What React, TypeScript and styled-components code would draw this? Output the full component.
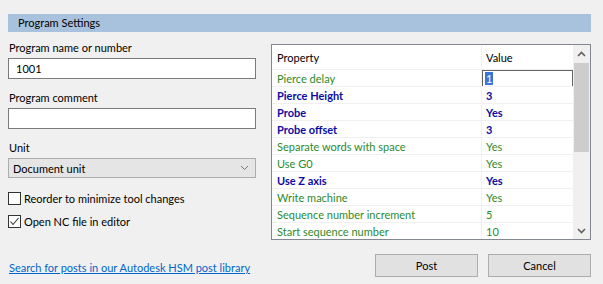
import React from "react";
import styled, { createGlobalStyle } from "styled-components";

const Global = createGlobalStyle`
  html, body { margin: 0; padding: 0; background: #f0f0f0; }
  body { font-family: Lato, "Noto Sans", sans-serif; font-size: 11px; color: #000; }
  * { box-sizing: border-box; }
`;

const Page = styled.div`
  width: 603px;
  height: 284px;
  background: #f0f0f0;
  padding-top: 14px;
  display: flex;
  flex-direction: column;
  overflow: hidden;
`;

const Header = styled.div`
  margin: 0 12px 0 8px;
  height: 18px;
  background: #a8c2dd;
  padding-left: 10px;
  line-height: 18px;
`;

const Body = styled.div`
  display: flex;
  margin-left: 8px;
`;

const Left = styled.div`
  width: 248px;
  display: flex;
  flex-direction: column;
  padding-top: 8px;
`;

const Label = styled.div<{ $mt?: number }>`
  height: 16px;
  line-height: 16px;
  margin-top: ${(p) => p.$mt ?? 0}px;
  padding-left: 1px;
`;

const TextInput = styled.div`
  margin-top: 2px;
  height: 21px;
  background: #fff;
  border: 1px solid #7a7a7a;
  padding-left: 7px;
  line-height: 19px;
`;

const Select = styled.div`
  margin-top: 2px;
  height: 20px;
  background: #e5e5e5;
  border: 1px solid #adadad;
  padding: 0 6px 0 4px;
  display: flex;
  align-items: center;
  justify-content: space-between;
`;

const CheckRow = styled.div<{ $mt: number }>`
  margin-top: ${(p) => p.$mt}px;
  height: 16px;
  display: flex;
  align-items: center;
  gap: 3px;
`;

const Box = styled.div`
  width: 13px;
  height: 13px;
  border: 1px solid #333;
  background: #fff;
  display: flex;
  align-items: center;
  justify-content: center;
`;

const Link = styled.a`
  margin-top: 31px;
  color: #0066cc;
  text-decoration: underline;
  line-height: 16px;
  padding-left: 1px;
  white-space: nowrap;
  cursor: pointer;
`;

const Right = styled.div`
  margin-left: 15px;
  margin-top: 12px;
  display: flex;
  flex-direction: column;
`;

const Grid = styled.div`
  width: 320px;
  height: 196px;
  border: 1px solid #828790;
  background: #fff;
  display: flex;
`;

const Table = styled.div`
  width: 301px;
  display: flex;
  flex-direction: column;
`;

const HeadRow = styled.div`
  height: 24px;
  display: flex;
  align-items: center;
`;

const Row = styled.div`
  height: 17px;
  display: flex;
  align-items: center;
  border-top: 1px solid #f0f0f0;
`;

const NameCell = styled.div<{ $bold?: boolean; $color?: string }>`
  width: 210px;
  padding-left: 5px;
  height: 100%;
  display: flex;
  align-items: center;
  border-right: 1px solid #f0f0f0;
  color: ${(p) => p.$color ?? "#000"};
  font-weight: ${(p) => (p.$bold ? 700 : 400)};
  white-space: nowrap;
`;

const ValueCell = styled.div<{ $bold?: boolean; $color?: string }>`
  flex: 1;
  padding-left: 4px;
  height: 100%;
  display: flex;
  align-items: center;
  color: ${(p) => p.$color ?? "#000"};
  font-weight: ${(p) => (p.$bold ? 700 : 400)};
`;

const EditCell = styled.div`
  flex: 1;
  height: 17px;
  border: 1px solid #646464;
  background: #fff;
  padding-left: 2px;
  display: flex;
  align-items: center;
`;

const Sel = styled.span`
  background: #3875d7;
  color: #fff;
  line-height: 13px;
  padding: 0 1px;
`;

const Scroll = styled.div`
  width: 17px;
  margin-left: auto;
  background: #f0f0f0;
  display: flex;
  flex-direction: column;
  align-items: center;
`;

const Arrow = styled.div`
  height: 17px;
  width: 17px;
  display: flex;
  align-items: center;
  justify-content: center;
`;

const Thumb = styled.div`
  width: 15px;
  height: 89px;
  background: #cdcdcd;
  margin-top: 1px;
`;

const Spacer = styled.div`
  flex: 1;
`;

const Buttons = styled.div`
  display: flex;
  gap: 10px;
  margin-top: 14px;
  margin-left: 104px;
`;

const Button = styled.button`
  width: 103px;
  height: 23px;
  background: #e1e1e1;
  border: 1px solid #adadad;
  font-family: inherit;
  font-size: 11px;
  color: #000;
  padding: 0;
`;

const GREEN = "#2c8a2c";
const BLUE = "#0c0ca4";

type P = { name: string; value: string; bold?: boolean };
const rows: P[] = [
  { name: "Pierce Height", value: "3", bold: true },
  { name: "Probe", value: "Yes", bold: true },
  { name: "Probe offset", value: "3", bold: true },
  { name: "Separate words with space", value: "Yes" },
  { name: "Use G0", value: "Yes" },
  { name: "Use Z axis", value: "Yes", bold: true },
  { name: "Write machine", value: "Yes" },
  { name: "Sequence number increment", value: "5" },
  { name: "Start sequence number", value: "10" },
];

const Chevron = ({ up }: { up?: boolean }) => (
  <svg width="9" height="6" viewBox="0 0 9 6">
    <path
      d={up ? "M1 5 L4.5 1.5 L8 5" : "M1 1 L4.5 4.5 L8 1"}
      fill="none"
      stroke="#606060"
      strokeWidth="1.6"
    />
  </svg>
);

export default function App() {
  return (
    <Page>
      <Global />
      <Header>Program Settings</Header>
      <Body>
        <Left>
          <Label>Program name or number</Label>
          <TextInput>1001</TextInput>
          <Label $mt={11}>Program comment</Label>
          <TextInput />
          <Label $mt={11}>Unit</Label>
          <Select>
            <span>Document unit</span>
            <svg width="9" height="6" viewBox="0 0 9 6">
              <path d="M1 1 L4.5 4.5 L8 1" fill="none" stroke="#777" strokeWidth="1" />
            </svg>
          </Select>
          <CheckRow $mt={12}>
            <Box />
            <span>Reorder to minimize tool changes</span>
          </CheckRow>
          <CheckRow $mt={7}>
            <Box>
              <svg width="11" height="11" viewBox="0 0 11 11">
                <path d="M1.5 5.5 L4 8.5 L9.5 2" fill="none" stroke="#333" strokeWidth="1.1" />
              </svg>
            </Box>
            <span>Open NC file in editor</span>
          </CheckRow>
          <Link>Search for posts in our Autodesk HSM post library</Link>
        </Left>
        <Right>
          <Grid>
            <Table>
              <HeadRow>
                <NameCell>Property</NameCell>
                <ValueCell>Value</ValueCell>
              </HeadRow>
              <Row>
                <NameCell $color={GREEN}>Pierce delay</NameCell>
                <EditCell>
                  <Sel>1</Sel>
                </EditCell>
              </Row>
              {rows.map((r) => (
                <Row key={r.name}>
                  <NameCell $bold={r.bold} $color={r.bold ? BLUE : GREEN}>
                    {r.name}
                  </NameCell>
                  <ValueCell $bold={r.bold} $color={r.bold ? BLUE : GREEN}>
                    {r.value}
                  </ValueCell>
                </Row>
              ))}
            </Table>
            <Scroll>
              <Arrow>
                <Chevron up />
              </Arrow>
              <Thumb />
              <Spacer />
              <Arrow>
                <Chevron />
              </Arrow>
            </Scroll>
          </Grid>
          <Buttons>
            <Button>Post</Button>
            <Button>Cancel</Button>
          </Buttons>
        </Right>
      </Body>
    </Page>
  );
}
